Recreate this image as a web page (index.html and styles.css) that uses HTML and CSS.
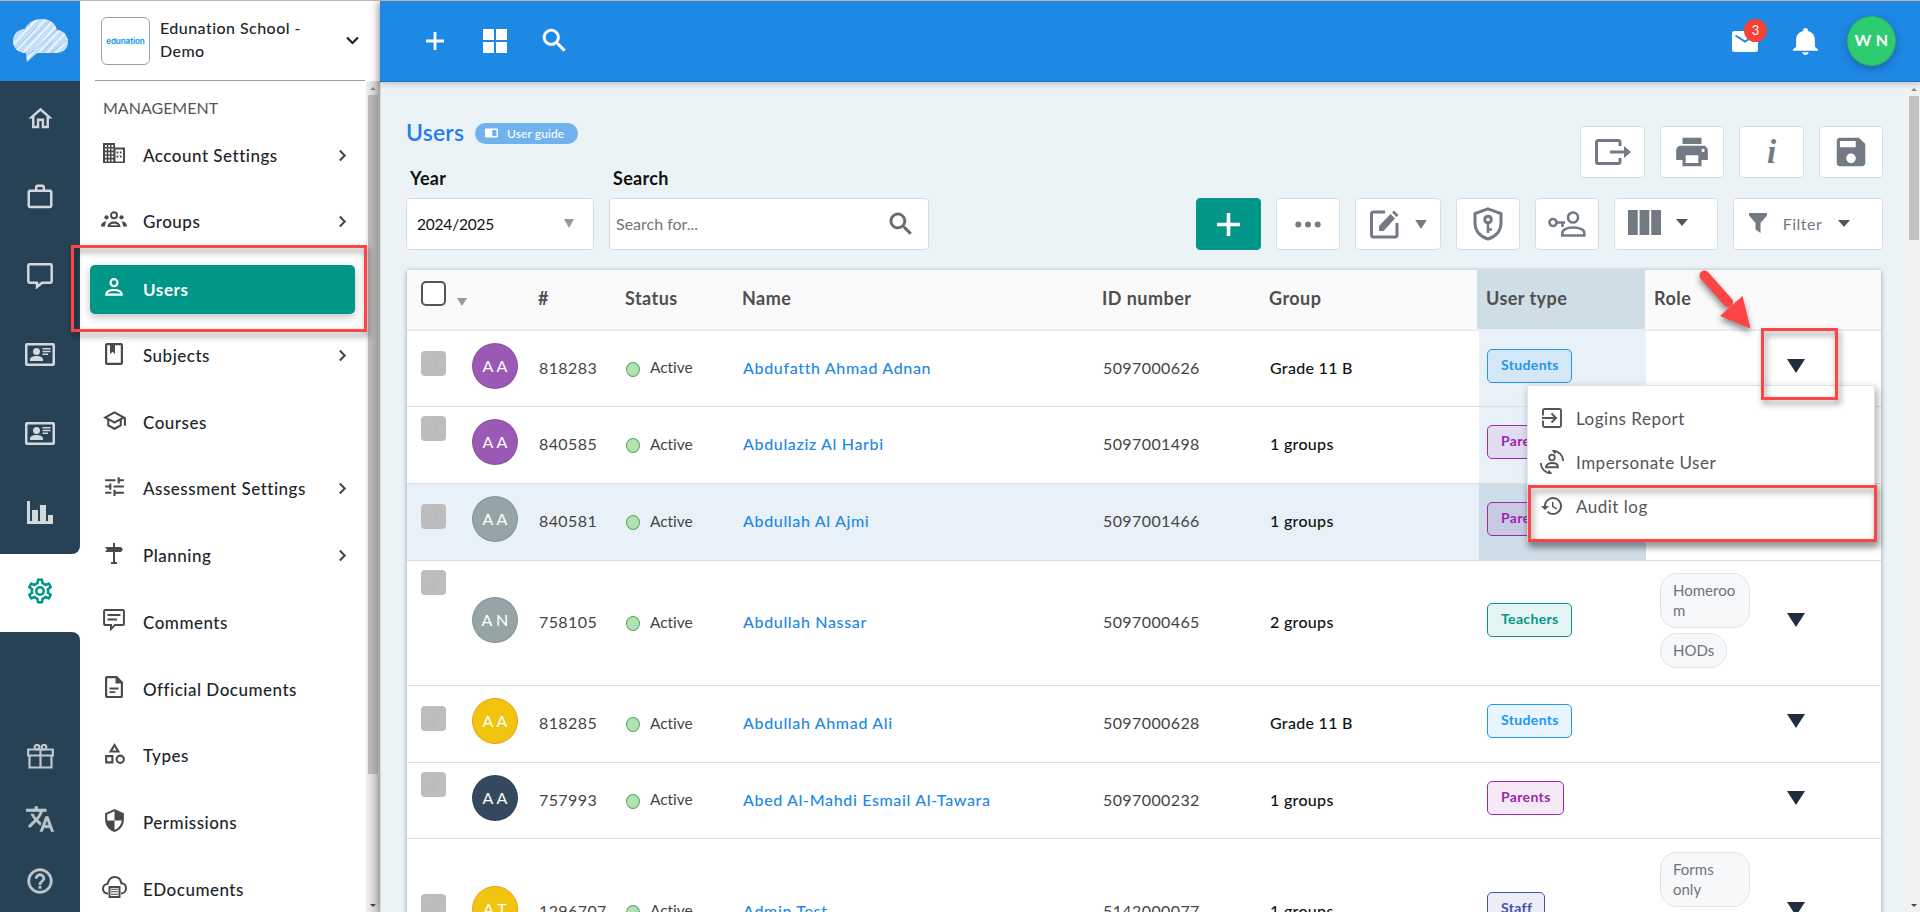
FILE: index.html
```
<!DOCTYPE html>
<html lang="en">
<head>
<meta charset="utf-8">
<title>Users</title>
<link rel="stylesheet" href="styles.css">
</head>
<body>
<svg class="defs" width="0" height="0">
  <symbol id="search" viewBox="0 0 24 24"><path d="M15.5 14h-.79l-.28-.27C15.41 12.59 16 11.11 16 9.5 16 5.91 13.09 3 9.5 3S3 5.91 3 9.5 5.91 16 9.5 16c1.61 0 3.09-.59 4.23-1.57l.27.28v.79l5 4.99L20.49 19l-4.99-5zm-6 0C7.01 14 5 11.99 5 9.5S7.01 5 9.5 5 14 7.01 14 9.5 11.99 14 9.5 14z" stroke="currentColor" stroke-width=".3"/></symbol>
  <symbol id="idcard" viewBox="0 0 30 23"><path fill-rule="evenodd" d="M2 0h26a2 2 0 0 1 2 2v19a2 2 0 0 1-2 2H2a2 2 0 0 1-2-2V2a2 2 0 0 1 2-2zM2.500 2.500v18h25v-18z"/><circle cx="11.500" cy="8.500" r="3.500"/><path d="M5 18v-1.500c0-2.300 3-3.500 6.500-3.500s6.500 1.200 6.500 3.500V18zM17.500 5h8v1.500h-8zM17.500 7.800h8v1.500h-8zM17.500 10.500h5.500V12h-5.500z"/></symbol>
  <symbol id="chev" viewBox="0 0 10 14"><path d="M2 1.500 7.500 7 2 12.500" fill="none" stroke="currentColor" stroke-width="2.200"/></symbol>
  <symbol id="tri" viewBox="0 0 18 14"><path d="M0 0h18L9 14z"/></symbol>
  <symbol id="check" viewBox="0 0 12 16"><path d="M1 10l3.500 4L11 1.500" fill="none" stroke="#b0bdc5" stroke-width="2"/></symbol>
</svg>
<div class="app">
  <nav class="rail">
    <div class="brand">
      <svg width="55" height="43" viewBox="0 0 55 43"><defs><clipPath id="cloud"><path d="M13 34C5 34 0 29 0 22c0-7 5-12 12-12C14 4 21 0 29 0c8 0 13 4 15 11 6 0 11 5 11 12 0 7-5 11-12 11H24L14 43z"/></clipPath></defs><g clip-path="url(#cloud)"><path d="M0 0h55v43H0z" fill="#c4dff7"/><g stroke="#eef7fe" stroke-width="1.800"><path d="M-6 22 14 2M-4 30 26 -2M2 33 33 0M6 38 40 2M13 41 44 6M23 36 50 8M32 36 54 12M40 37 58 17"/></g><g stroke="#8dc2f0" stroke-width=".9"><path d="M0 16 18 4M2 31 24 8M12 26 36 3M18 34 46 9M30 33 40 22M36 35 56 20M12 38 22 31"/></g></g></svg>
    </div>
    <div class="rail-top">
      <svg width="29" height="29" viewBox="0 0 24 24"><path d="M12 5.690l5 4.500V18h-2v-6H9v6H7v-7.810l5-4.500M12 3L2 12h3v8h6v-6h2v6h6v-8h3L12 3z"/></svg>
      <svg width="30" height="30" viewBox="0 0 24 24"><path d="M14 6V4h-4v2h4zM4 8v11h16V8H4zm16-2c1.110 0 2 .89 2 2v11c0 1.110-.89 2-2 2H4c-1.110 0-2-.89-2-2l.01-11c0-1.110.88-2 1.990-2h4V4c0-1.110.89-2 2-2h4c1.110 0 2 .89 2 2v2h4z"/></svg>
      <svg width="26" height="26" viewBox="0 0 26 26"><path d="M2.500 1.300h21a1.200 1.200 0 0 1 1.200 1.200v16a1.200 1.200 0 0 1-1.200 1.200H15l-5 4.300v-4.300H2.500a1.200 1.200 0 0 1-1.200-1.200v-16a1.200 1.200 0 0 1 1.200-1.200z" fill="none" stroke="currentColor" stroke-width="2.500"/></svg>
      <svg width="30" height="23"><use href="#idcard"/></svg>
      <svg width="30" height="23"><use href="#idcard"/></svg>
      <svg width="26" height="23" viewBox="0 0 26 23"><path d="M0 0h3v20h2V9h6v11h2V4h6v16h2v-6h5v9H0z"/></svg>
    </div>
    <div class="rail-active">
      <svg width="30" height="30" viewBox="0 0 24 24"><path d="M12,8A4,4 0 0,1 16,12A4,4 0 0,1 12,16A4,4 0 0,1 8,12A4,4 0 0,1 12,8M12,10A2,2 0 0,0 10,12A2,2 0 0,0 12,14A2,2 0 0,0 14,12A2,2 0 0,0 12,10M10,22C9.750,22 9.540,21.820 9.500,21.580L9.130,18.930C8.500,18.680 7.960,18.340 7.440,17.940L4.950,18.950C4.730,19.030 4.460,18.950 4.340,18.730L2.340,15.270C2.210,15.050 2.270,14.780 2.460,14.630L4.570,12.970L4.500,12L4.570,11L2.460,9.370C2.270,9.220 2.210,8.950 2.340,8.730L4.340,5.270C4.460,5.050 4.730,4.960 4.950,5.050L7.440,6.050C7.960,5.660 8.500,5.320 9.130,5.070L9.500,2.420C9.540,2.180 9.750,2 10,2H14C14.250,2 14.460,2.180 14.500,2.420L14.870,5.070C15.500,5.320 16.040,5.660 16.560,6.050L19.050,5.050C19.270,4.960 19.540,5.050 19.660,5.270L21.660,8.730C21.790,8.950 21.730,9.220 21.540,9.370L19.430,11L19.500,12L19.430,13L21.540,14.630C21.730,14.780 21.790,15.050 21.660,15.270L19.660,18.730C19.540,18.950 19.270,19.040 19.050,18.950L16.560,17.950C16.040,18.340 15.500,18.680 14.870,18.930L14.500,21.580C14.460,21.820 14.250,22 14,22H10M11.250,4L10.880,6.610C9.680,6.860 8.620,7.500 7.850,8.390L5.440,7.350L4.690,8.650L6.800,10.200C6.400,11.370 6.400,12.640 6.800,13.800L4.680,15.360L5.430,16.660L7.860,15.620C8.630,16.500 9.680,17.140 10.870,17.380L11.240,20H12.760L13.130,17.390C14.320,17.140 15.370,16.500 16.140,15.620L18.570,16.660L19.320,15.360L17.200,13.810C17.600,12.640 17.600,11.370 17.200,10.200L19.310,8.650L18.560,7.350L16.150,8.390C15.380,7.500 14.320,6.860 13.120,6.620L12.750,4H11.250Z"/></svg>
    </div>
    <div class="rail-bottom">
      <svg width="27" height="25" viewBox="0 0 27 25" fill="none" stroke="currentColor" stroke-width="2.200"><path d="M1.200 5.500h24.600v6H1.200zM2.500 11.500h22v12h-22zM13.500 5.500v18"/><circle cx="10" cy="3.200" r="2.300"/><circle cx="17" cy="3.200" r="2.300"/></svg>
      <svg width="30" height="30" viewBox="0 0 24 24"><path stroke="currentColor" stroke-width=".5" d="M12.870 15.070l-2.540-2.510.03-.03c1.740-1.940 2.980-4.170 3.710-6.530H17V4h-7V2H8v2H1v1.990h11.170C11.500 7.920 10.440 9.750 9 11.350 8.070 10.320 7.300 9.190 6.690 8h-2c.73 1.630 1.730 3.170 2.980 4.560l-5.090 5.020L4 19l5-5 3.110 3.110.76-2.040zM18.500 10h-2L12 22h2l1.120-3h4.750L21 22h2l-4.500-12zm-2.620 7l1.620-4.330L19.120 17h-3.240z"/></svg>
      <svg width="30" height="30" viewBox="0 0 24 24"><path stroke="currentColor" stroke-width=".3" d="M11 18h2v-2h-2v2zm1-16C6.480 2 2 6.480 2 12s4.480 10 10 10 10-4.480 10-10S17.520 2 12 2zm0 18c-4.410 0-8-3.590-8-8s3.590-8 8-8 8 3.590 8 8-3.590 8-8 8zm0-14c-2.210 0-4 1.790-4 4h2c0-1.100.9-2 2-2s2 .9 2 2c0 2-3 1.750-3 5h2c0-2.250 3-2.500 3-5 0-2.210-1.790-4-4-4z"/></svg>
    </div>
  </nav>

  <aside class="side">
    <div class="school">
      <div class="school-logo">edunation</div>
      <div class="school-name">Edunation School - Demo</div>
      <svg width="13" height="9" viewBox="0 0 13 9"><path d="M1 1.500 6.500 7 12 1.500" fill="none" stroke="#222" stroke-width="2.200"/></svg>
    </div>
    <div class="side-body">
      <div class="menu">
        <div class="menu-title">MANAGEMENT</div>
        <a class="item"><i><svg width="22" height="20" viewBox="0 0 22 20"><path fill-rule="evenodd" d="M0 0h12v4.500h10V20H0zM2 2v2h1.800V2zm3.300 0v2H7V2zm3.200 0v2h1.800V2zM2 5.600v2h1.800v-2zm3.300 0v2H7v-2zm3.200 0v2h1.800v-2zM2 9.200v2h1.800v-2zm3.300 0v2H7v-2zm3.200 0v2h1.800v-2zM2 12.800v2h1.800v-2zm3.300 0v2H7v-2zm3.200 0v2h1.800v-2zM2 16.400v2h1.800v-2zm3.300 0v2H7v-2zm3.200 0v2h1.800v-2zM12.500 6.500v12H20v-12z"/><path d="M13.500 8.500h1.800v2h-1.800zM16.800 8.500h1.800v2h-1.800zM13.500 12.500h1.800v2h-1.800zM16.800 12.500h1.800v2h-1.800z"/></svg></i><span>Account Settings</span><svg class="chev"><use href="#chev"/></svg></a>
        <a class="item"><i><svg width="26" height="17" viewBox="0 0 26 17"><circle cx="13" cy="4.200" r="3" fill="none" stroke="currentColor" stroke-width="1.900"/><circle cx="5.500" cy="6.300" r="2.100"/><circle cx="20.500" cy="6.300" r="2.100"/><path d="M6.500 16c0-3.500 3-5.500 6.500-5.500s6.500 2 6.500 5.500zM0 15.500c0-3 2-5 5.500-5-1 1.300-1.500 3-1.500 5zM26 15.500c0-3-2-5-5.500-5 1 1.300 1.500 3 1.500 5z"/><path d="M9 14.200c1-2 7-2 8 0z" fill="#fff"/></svg></i><span>Groups</span><svg class="chev"><use href="#chev"/></svg></a>
        <a class="item selected"><i><svg width="18" height="18" viewBox="0 0 18 18" fill="none" stroke="currentColor" stroke-width="2.200"><circle cx="9" cy="4.700" r="3.500"/><path d="M1.200 16.700c0-3 3.300-4.700 7.800-4.700s7.800 1.700 7.800 4.700z"/></svg></i><span>Users</span></a>
        <a class="item"><i><svg width="18" height="22" viewBox="0 0 18 22"><rect x="1.100" y="1.100" width="15.800" height="19.800" rx="1" fill="none" stroke="currentColor" stroke-width="2.200"/><path d="M5 1h5v10L7.500 8.800 5 11z"/></svg></i><span>Subjects</span><svg class="chev"><use href="#chev"/></svg></a>
        <a class="item"><i><svg width="25" height="25" viewBox="0 0 24 24"><path d="M12 3L1 9l4 2.180v6L12 21l7-3.820v-6l2-1.090V17h2V9L12 3zm6.820 6L12 12.720 5.180 9 12 5.280 18.820 9zM17 15.990l-5 2.730-5-2.730v-3.720L12 15l5-2.730v3.720z"/></svg></i><span>Courses</span></a>
        <a class="item"><i><svg width="25" height="25" viewBox="0 0 24 24"><path d="M3 17v2h6v-2H3zM3 5v2h10V5H3zm10 16v-2h8v-2h-8v-2h-2v6h2zM7 9v2H3v2h4v2h2V9H7zm14 4v-2H11v2h10zm-6-4h2V7h4V5h-4V3h-2v6z"/></svg></i><span>Assessment Settings</span><svg class="chev"><use href="#chev"/></svg></a>
        <a class="item"><i><svg width="18" height="21" viewBox="0 0 18 21"><path d="M8 0h2v4h6l2 2.500L16 9h-6v10h2v2H6v-2h2V9H0l2-2.500L0 4h8z"/></svg></i><span>Planning</span><svg class="chev"><use href="#chev"/></svg></a>
        <a class="item"><i><svg width="22" height="22" viewBox="0 0 22 22"><path d="M2 1.100h18a.9.9 0 0 1 .9.900v13a.9.9 0 0 1-.9.900H12L8 20v-4.100H2a.9.9 0 0 1-.9-.9V2a.9.9 0 0 1 .9-.9zM4.500 6h13M4.500 10.500h9.500" fill="none" stroke="currentColor" stroke-width="2"/></svg></i><span>Comments</span></a>
        <a class="item"><i><svg width="18" height="22" viewBox="0 0 18 22"><path d="M2 1.100h9.500l5.400 5.400V20a1 1 0 0 1-1 1H2a.9.9 0 0 1-.9-1V2A.9.9 0 0 1 2 1.100z" fill="none" stroke="currentColor" stroke-width="2.200"/><path d="M10.500 1v6.500H17zM4.500 11.500h9v1.900h-9zM4.500 15.200h5.800v1.900H4.500z"/></svg></i><span>Official Documents</span></a>
        <a class="item"><i><svg width="25" height="25" viewBox="0 0 24 24"><path d="M12 2l-5.500 9h11L12 2zm0 3.840L13.930 9h-3.870L12 5.840zM17.500 13a4.500 4.500 0 1 0 0 9 4.500 4.500 0 0 0 0-9zm0 7a2.500 2.500 0 1 1 0-5 2.500 2.500 0 0 1 0 5zM3 21.500h8v-8H3v8zm2-6h4v4H5v-4z"/></svg></i><span>Types</span></a>
        <a class="item"><i><svg width="25" height="25" viewBox="0 0 24 24"><path d="M12 1L3 5v6c0 5.550 3.840 10.740 9 12 5.160-1.260 9-6.450 9-12V5l-9-4zm0 10.990h7c-.53 4.120-3.280 7.790-7 8.940V12H5V6.300l7-3.110v8.800z"/></svg></i><span>Permissions</span></a>
        <a class="item"><i><svg width="25" height="22" viewBox="0 0 25 22"><path d="M6 17.500C3 17.500 1 15.500 1 12.800c0-2.600 2-4.600 4.500-4.800C6.500 4 9 1.100 12.600 1.100c3.600 0 6.200 2.600 6.700 6.200 2.700.2 4.700 2.200 4.700 4.900 0 3-2 5.200-5 5.200" fill="none" stroke="currentColor" stroke-width="2"/><path fill-rule="evenodd" d="M6.500 10h12v12h-12zm2 2v8h8v-8z"/><path d="M9 12.800h7v1H9zM9 15.300h7v1H9zM9 17.800h7v1H9z"/></svg></i><span>EDocuments</span></a>
      </div>
      <div class="bar side-bar"><b class="up"></b><span class="thumb"></span><b class="down"></b></div>
    </div>
  </aside>

  <main class="main">
    <header class="top">
      <svg width="18" height="18" viewBox="0 0 18 18"><path d="M9 0v18M0 9h18" stroke="#fff" stroke-width="2.800"/></svg>
      <svg width="24" height="24" viewBox="0 0 24 24"><path d="M0 0h11v11H0zM13 0h11v11H13zM0 13h11v11H0zM13 13h11v11H13z"/></svg>
      <svg width="31" height="31"><use href="#search"/></svg>
      <div class="top-right">
        <div class="mail"><svg width="26" height="21" viewBox="0 0 26 21"><rect width="26" height="21" rx="2.500"/><path d="M3.500 4.500 13 10.500l9.500-6" fill="none" stroke="#1e88e5" stroke-width="2"/></svg><span class="count">3</span></div>
        <svg class="bell" width="30" height="33" viewBox="4 2.500 16 19.500" preserveAspectRatio="none"><path d="M12 22c1.100 0 2-.9 2-2h-4c0 1.100.89 2 2 2zm6-6v-5c0-3.070-1.640-5.640-4.500-6.320V4c0-.83-.67-1.500-1.500-1.500s-1.500.67-1.500 1.500v.68C7.630 5.360 6 7.920 6 11v5l-2 2v1h16v-1l-2-2z"/></svg>
        <div class="me">W N</div>
      </div>
    </header>
    <div class="page">
      <div class="content">
        <section class="controls">
          <div class="left">
            <div class="title-row"><h1>Users</h1><a class="guide"><svg width="13" height="10" viewBox="0 0 13 10"><path fill-rule="evenodd" d="M1 .5h11a1 1 0 0 1 1 1v7a1 1 0 0 1-1 1H7L6.500 10 6 9.500H1a1 1 0 0 1-1-1v-7a1 1 0 0 1 1-1zM7.200 2v6h4.300V2z"/></svg>User guide</a></div>
            <div class="fields">
              <div class="field year"><label>Year</label><div class="box">2024/2025<svg width="10" height="9" viewBox="0 0 18 14" preserveAspectRatio="none"><path d="M0 0h18L9 14z"/></svg></div></div>
              <div class="field find"><label>Search</label><div class="box">Search for...<svg width="30" height="30"><use href="#search"/></svg></div></div>
            </div>
          </div>
          <div class="right">
            <div class="buttons">
              <div class="btn w65"><svg width="36" height="26" viewBox="0 0 36 26"><path d="M25 7V3a1.500 1.500 0 0 0-1.500-1.500H3A1.500 1.500 0 0 0 1.500 3v20A1.500 1.500 0 0 0 3 24.500h20.500A1.500 1.500 0 0 0 25 23v-4" fill="none" stroke="currentColor" stroke-width="3"/><path d="M15 11.500h14V7l7 6-7 6v-4.500H15z"/></svg></div>
              <div class="btn w64"><svg width="38" height="38" viewBox="0 0 24 24"><path d="M19 8H5c-1.660 0-3 1.340-3 3v6h4v4h12v-4h4v-6c0-1.660-1.340-3-3-3zm-3 11H8v-5h8v5zm3-7c-.55 0-1-.45-1-1s.45-1 1-1 1 .45 1 1-.45 1-1 1zm-1-9H6v4h12V3z"/></svg></div>
              <div class="btn w65 info">i</div>
              <div class="btn w64"><svg width="38" height="38" viewBox="0 0 24 24"><path d="M17 3H5c-1.110 0-2 .9-2 2v14c0 1.100.89 2 2 2h14c1.100 0 2-.9 2-2V7l-4-4zm-5 16c-1.660 0-3-1.340-3-3s1.340-3 3-3 3 1.340 3 3-1.340 3-3 3zm3-10H5V5h10v4z"/></svg></div>
            </div>
            <div class="buttons">
              <div class="btn w65 add"><svg width="23" height="23" viewBox="0 0 23 23"><path d="M11.500 0v23M0 11.500h23" stroke="#fff" stroke-width="3.600"/></svg></div>
              <div class="btn w64"><svg width="26" height="7" viewBox="0 0 26 7"><circle cx="3.300" cy="3.500" r="3"/><circle cx="13" cy="3.500" r="3"/><circle cx="22.700" cy="3.500" r="3"/></svg></div>
              <div class="btn w86"><svg width="30" height="30" viewBox="0 0 30 30"><path d="M15 3H3a1.500 1.500 0 0 0-1.500 1.500v22A1.500 1.500 0 0 0 3 28h22.500a1.500 1.500 0 0 0 1.500-1.500V14" fill="none" stroke="currentColor" stroke-width="3"/><path d="M9 22v-5L20.500 5l4.500 4.500L13.500 22zM22 3.500 24 1.500 28.500 6l-2 2z"/></svg><svg class="tri" width="12" height="9"><use href="#tri"/></svg></div>
              <div class="btn w64"><svg width="30" height="34" viewBox="0 0 30 34" fill="none" stroke="currentColor" stroke-width="3"><path d="M15 1.800 28 6.500V16c0 8-5.500 14-13 16C7.500 30 2 24 2 16V6.500z"/><circle cx="15" cy="12.500" r="3.300"/><path d="M15 16v10M15 22.500h4" stroke-width="2.600"/></svg></div>
              <div class="btn w64"><svg width="38" height="26" viewBox="0 0 38 26" fill="none" stroke="currentColor" stroke-width="2.600"><circle cx="25" cy="6.500" r="5"/><path d="M14.300 24.500V22c0-3 4-5.500 11-5.500s11 2.500 11 5.500v2.500z"/><circle cx="5" cy="11.500" r="3.500"/><path d="M8.500 11.500H17M14.500 11.500v4.500"/></svg></div>
              <div class="btn w104"><svg width="33" height="25" viewBox="0 0 33 25"><path d="M0 0h9.700v25H0zM11.600 0h9.700v25h-9.700zM23.200 0H33v25h-9.800z"/></svg><svg class="tri" width="12" height="7" viewBox="0 0 18 14" preserveAspectRatio="none"><path d="M0 0h18L9 14z"/></svg></div>
              <div class="btn w150"><svg width="18" height="20" viewBox="0 0 18 20"><path d="M0 0h18v2.500L11.500 10v10L6.500 16.500V10L0 2.500z"/></svg><span>Filter</span><svg class="tri" width="12" height="7" viewBox="0 0 18 14" preserveAspectRatio="none"><path d="M0 0h18L9 14z"/></svg></div>
            </div>
          </div>
        </section>

        <section class="table">
          <div class="row head">
            <div class="c-check"><span class="cb"></span><svg width="10" height="8"><use href="#tri"/></svg></div><div></div><div>#</div><div>Status</div><div>Name</div><div>ID number</div><div>Group</div><div class="c-type">User type</div><div class="c-role">Role</div><div></div>
          </div>
          <div class="row r1">
            <div class="c-check mid"><span class="off"><svg width="12" height="16"><use href="#check"/></svg></span></div><div class="av purple">A A</div><div class="num">818283</div><div class="st"><em></em>Active</div><div class="name">Abdufatth Ahmad Adnan</div><div class="num">5097000626</div><div class="grp">Grade 11 B</div><div class="c-type"><span class="tag stu">Students</span></div><div class="c-role"></div><div class="act"><svg width="18" height="14"><use href="#tri"/></svg></div>
          </div>
          <div class="row r2">
            <div class="c-check"><span class="off"><svg width="12" height="16"><use href="#check"/></svg></span></div><div class="av purple">A A</div><div class="num">840585</div><div class="st"><em></em>Active</div><div class="name">Abdulaziz Al Harbi</div><div class="num">5097001498</div><div class="grp">1 groups</div><div class="c-type"><span class="tag par">Parents</span></div><div class="c-role"></div><div class="act"></div>
          </div>
          <div class="row r3">
            <div class="c-check mid"><span class="off"><svg width="12" height="16"><use href="#check"/></svg></span></div><div class="av gray">A A</div><div class="num">840581</div><div class="st"><em></em>Active</div><div class="name">Abdullah Al Ajmi</div><div class="num">5097001466</div><div class="grp">1 groups</div><div class="c-type"><span class="tag par">Parents</span></div><div class="c-role"></div><div class="act"></div>
          </div>
          <div class="row r4">
            <div class="c-check"><span class="off"><svg width="12" height="16"><use href="#check"/></svg></span></div><div class="av gray">A N</div><div class="num">758105</div><div class="st"><em></em>Active</div><div class="name">Abdullah Nassar</div><div class="num">5097000465</div><div class="grp">2 groups</div><div class="c-type"><span class="tag tea">Teachers</span></div><div class="c-role"><span class="role">Homeroo<br>m</span><span class="role">HODs</span></div><div class="act"><svg width="18" height="14"><use href="#tri"/></svg></div>
          </div>
          <div class="row r5">
            <div class="c-check mid"><span class="off"><svg width="12" height="16"><use href="#check"/></svg></span></div><div class="av yellow">A A</div><div class="num">818285</div><div class="st"><em></em>Active</div><div class="name">Abdullah Ahmad Ali</div><div class="num">5097000628</div><div class="grp">Grade 11 B</div><div class="c-type"><span class="tag stu">Students</span></div><div class="c-role"></div><div class="act"><svg width="18" height="14"><use href="#tri"/></svg></div>
          </div>
          <div class="row r6">
            <div class="c-check"><span class="off"><svg width="12" height="16"><use href="#check"/></svg></span></div><div class="av navy">A A</div><div class="num">757993</div><div class="st"><em></em>Active</div><div class="name">Abed Al-Mahdi Esmail Al-Tawara</div><div class="num">5097000232</div><div class="grp">1 groups</div><div class="c-type"><span class="tag par">Parents</span></div><div class="c-role"></div><div class="act"><svg width="18" height="14"><use href="#tri"/></svg></div>
          </div>
          <div class="row r7">
            <div class="c-check low"><span class="off"><svg width="12" height="16"><use href="#check"/></svg></span></div><div class="av yellow">A T</div><div class="num">1296707</div><div class="st"><em></em>Active</div><div class="name">Admin Test</div><div class="num">5142000077</div><div class="grp">1 groups</div><div class="c-type"><span class="tag sta">Staff</span></div><div class="c-role"><span class="role">Forms<br>only</span><span class="role"></span></div><div class="act"><svg width="18" height="14"><use href="#tri"/></svg></div>
          </div>
        </section>
      </div>
      <div class="bar page-bar"><b class="up"></b><span class="thumb"></span><b class="down"></b></div>
    </div>
  </main>
</div>

<div class="dropdown">
  <a><svg width="24" height="24" viewBox="0 0 24 24"><path d="M3 9.500V4.500A1.500 1.500 0 0 1 4.500 3h15A1.500 1.500 0 0 1 21 4.500v15a1.500 1.500 0 0 1-1.500 1.500h-15A1.500 1.500 0 0 1 3 19.500v-5M2 12h13M11.500 7.500 16 12l-4.500 4.500" fill="none" stroke="currentColor" stroke-width="1.900"/></svg>Logins Report</a>
  <a><svg width="24" height="24" viewBox="0 0 24 24"><circle cx="12" cy="7.500" r="2.800" fill="none" stroke="currentColor" stroke-width="1.800"/><path d="M6 17.300c0-2.600 2.300-4.300 6-4.300s6 1.700 6 4.300z" fill="none" stroke="currentColor" stroke-width="1.900"/><path d="M12.500.8C18.500.8 23 5 23.200 11M11.500 23.200C5.500 23.200 1 19 .8 13" fill="none" stroke="currentColor" stroke-width="1.800"/><path d="M12 0l4.500.5L15 4.500zM12 24l-4.500-.5L9 19.500z"/></svg>Impersonate User</a>
  <a><svg width="24" height="24" viewBox="0 0 24 24"><path d="M13 3a9 9 0 0 0-9 9H1l3.890 3.890.07.14L9 12H6c0-3.870 3.130-7 7-7s7 3.130 7 7-3.130 7-7 7c-1.930 0-3.680-.79-4.940-2.060l-1.420 1.420A8.954 8.954 0 0 0 13 21a9 9 0 0 0 0-18zm-1 5v5l4.280 2.540.72-1.210-3.500-2.080V8H12z"/></svg>Audit log</a>
</div>
<div class="mark mark-users"></div>
<div class="mark mark-arrow"></div>
<div class="mark mark-audit"></div>
<svg class="pointer" width="64" height="70" viewBox="0 0 64 70"><path d="M9.500 9.500 33 36" stroke="#fd4545" stroke-width="10" stroke-linecap="round"/><path d="M55.500 62.500 25 50 47.500 30z" fill="#fd4545"/></svg>
</body>
</html>
```
FILE: styles.css
```
* { box-sizing: border-box; }
body { margin: 0; height: 912px; overflow: hidden; position: relative; font-family: Lato, "Open Sans", sans-serif; color: #212529; }
svg { fill: currentColor; display: block; flex: none; }
svg[fill="none"] { fill: none; }
.defs { position: absolute; }
.app { display: flex; height: 912px; border-top: 1px solid #c4b0ac; overflow: hidden; }

/* icon rail */
.rail { width: 80px; display: flex; flex-direction: column; background: #fff; }
.brand { height: 80px; background: #1e88e5; padding: 18px 0 0 13px; }
.rail-top { height: 473px; background: #284255; border-bottom-right-radius: 8px; display: flex; flex-direction: column; color: #d3d8dd; }
.rail-top svg, .rail-bottom svg { margin: 0 auto; }
.rail-top svg:nth-child(1) { margin-top: 23px; }
.rail-top svg:nth-child(2) { margin-top: 49px; }
.rail-top svg:nth-child(3) { margin-top: 51px; }
.rail-top svg:nth-child(4) { margin-top: 54px; }
.rail-top svg:nth-child(5) { margin-top: 56px; }
.rail-top svg:nth-child(6) { margin-top: 56px; }
.rail-active { height: 78px; color: #009688; display: flex; align-items: center; justify-content: center; padding-bottom: 4px; }
.rail-bottom { flex: 1; background: #284255; border-top-right-radius: 8px; color: #bfc6cc; }
.rail-bottom svg:nth-child(1) { margin-top: 112px; }
.rail-bottom svg:nth-child(2) { margin-top: 35px; }
.rail-bottom svg:nth-child(3) { margin-top: 32px; }

/* side menu */
.side { width: 300px; background: #fff; }
.school { height: 80px; width: 270px; margin-left: 15px; border-bottom: 1px solid #8fa5b3; display: flex; align-items: center; padding-left: 6px; }
.school-logo { width: 49px; height: 48px; border: 1px solid #8fa5b3; border-radius: 6px; display: flex; align-items: center; justify-content: center; font: 700 8px Inter, sans-serif; letter-spacing: -.1px; color: #1ca0e8; }
.school-name { width: 196px; padding: 0 44px 4px 10px; font-size: 16px; font-weight: 500; line-height: 23px; letter-spacing: .45px; }
.side-body { display: flex; justify-content: space-between; height: 831px; }
.menu { width: 275px; padding-left: 10px; }
.menu-title { font-size: 16px; height: 46px; padding: 17px 0 0 13px; line-height: 20px; color: #555; white-space: nowrap; }
.item { display: flex; align-items: center; height: 48px; margin-bottom: 18.700px; padding: 8px 0 0 9px; font-size: 17px; font-weight: 500; letter-spacing: .5px; }
.item i { width: 30px; display: flex; justify-content: center; color: #4a4a4a; margin: -4px 14px 0 0; }
.item span { flex: 1; }
.chev { width: 9px; height: 13px; margin-right: 8px; color: #444; }
.item.selected { height: 49px; margin: 23.200px 0 13.700px; padding-top: 0; background: #009688; border-radius: 5px; color: #fff; font-weight: 700; letter-spacing: .6px; box-shadow: 0 3px 8px rgba(0,0,0,.25); }
.item.selected i { color: #fff; }

.bar { display: flex; flex-direction: column; align-items: center; background: #f1f1f1; }
.side-bar { width: 14px; background: linear-gradient(90deg, #efefef, #ccc); }
.bar .thumb { width: 10px; background: #b8b8b8; }
.bar b { border: 3px solid transparent; height: 0; }
.bar .up { border-bottom-color: #8a8a8a; border-top: 0; margin: 6px 0 5px; }
.bar .down { border-top-color: #444; border-bottom: 0; margin: auto 0 5px; }
.side-bar .thumb { height: 679px; }

/* top bar */
.main { width: 1540px; display: flex; flex-direction: column; position: relative; box-shadow: -2px 0 8px rgba(0,0,0,.3); }
.top { height: 81px; flex: none; background: #1e88e5; border-bottom: 1px solid #1a6fc0; color: #fff; display: flex; align-items: center; padding-left: 46px; z-index: 1; box-shadow: 0 2px 6px rgba(0,0,0,.2); }
.top > svg { margin-top: -1px; }
.top > svg:nth-child(2) { margin-left: 39px; }
.top > svg:nth-child(3) { margin-left: 32px; }
.top-right { margin-left: auto; display: flex; align-items: center; padding-right: 24px; }
.mail { position: relative; margin-right: 35px; }
.count { position: absolute; left: 12px; top: -12px; width: 23px; height: 23px; border-radius: 50%; background: #f44336; font-size: 13px; line-height: 22px; text-align: center; }
.bell { width: 25px; height: 27px; margin-right: 29px; }
.me { width: 49px; height: 50px; border-radius: 50%; background: #2ecc71; border: 1px solid #29b765; font-size: 16px; font-weight: 700; line-height: 45px; text-align: center; letter-spacing: .3px; box-shadow: 0 3px 8px rgba(0,0,0,.25); }

/* page */
.page { flex: 1; display: flex; justify-content: space-between; background: #ebf3f7; border-left: 1px solid #d3d9de; min-height: 0; overflow: hidden; }
.content { width: 1475px; margin-left: 26px; }
.page-bar { width: 13px; }
.page-bar .thumb { width: 10px; height: 144px; background: #c1c1c1; }
.controls { display: flex; justify-content: space-between; height: 188px; margin-left: -1px; }
.title-row { display: flex; align-items: center; padding-top: 40px; height: 63px; }
h1 { margin: 0; width: 69px; font-size: 23px; font-weight: 600; color: #1e7cf5; line-height: 22px; letter-spacing: .2px; padding-bottom: 4px; }
.guide { width: 103px; height: 21px; border-radius: 11px; background: #70b2ee; color: #fff; font-size: 12px; font-weight: 500; letter-spacing: .1px; display: flex; align-items: center; padding: 0 0 1px 10px; gap: 9px; }
.fields { display: flex; gap: 15px; padding-top: 22px; }
.field label { display: block; font-size: 18px; font-weight: 700; color: #111; line-height: 22px; padding-left: 4px; margin-bottom: 9px; letter-spacing: .3px; }
.box { height: 52px; background: #fff; border: 1px solid #d8dcdf; border-radius: 4px; display: flex; align-items: center; justify-content: space-between; font-size: 16px; }
.year .box { width: 188px; padding: 0 19px 1px 10px; color: #111; font-size: 15.500px; letter-spacing: -.2px; }
.year svg { color: #999; }
.find .box { width: 320px; padding: 0 12px 1px 6px; color: #757575; }
.find svg { color: #666; }
.right { width: 687px; padding-top: 44px; display: flex; flex-direction: column; gap: 20px; margin-right: -1px; }
.buttons { display: flex; gap: 15px; justify-content: flex-end; }
.btn { height: 52px; background: #fff; border: 1px solid #d8dde1; border-radius: 4px; display: flex; align-items: center; justify-content: center; color: #727b84; }
.w64 { width: 64px; }
.w65 { width: 65px; }
.w86 { width: 86px; gap: 15px; }
.w104 { width: 104px; gap: 15px; padding: 0 17px 4px 0; }
.w150 { width: 150px; gap: 16px; font-size: 16px; letter-spacing: .5px; padding: 0 17px 2px 0; }
.w104 .tri, .w150 .tri { color: #555; }
.info { font: italic 700 33px "Liberation Serif", serif; }
.add { background: #009688; border-color: #009688; }

/* table */
.table { width: 1474px; height: 700px; background: #fff; box-shadow: 0 1px 5px rgba(0,0,0,.35); }
.row { display: grid; grid-template-columns: 65px 67px 87px 117px 360px 167px 209px 167px 116px 119px; align-items: center; height: 77px; border-bottom: 1px solid #dcdfe1; font-size: 16px; }
.row.head { height: 61px; background: #fafafa; border-bottom: 2px solid #ebeef1; font-weight: 700; font-size: 18px; color: #4f4f4f; letter-spacing: .45px; line-height: 24px; }
.row.head > div { margin-top: -3px; margin-left: -1px; }
.r1 { height: 76px; }
.r4 { height: 125px; }
.r6 { height: 76px; }
.r7 { height: 146px; }
.c-check { align-self: start; padding: 9px 0 0 14px; }
.c-check.mid { padding-top: 20px; }
.c-check.low { padding-top: 55px; }
.row.head > .c-check { display: flex; padding-top: 11px; align-items: flex-end; gap: 11px; color: #999; margin: 0; }
.cb { width: 25px; height: 25px; border: 2px solid #555; border-radius: 5px; background: #fff; }
.off { width: 25px; height: 25px; border-radius: 4px; background: #bdbdbd; display: flex; align-items: center; justify-content: center; }
.av { width: 46px; height: 46px; border-radius: 50%; color: #fff; text-align: center; line-height: 43px; border: 1px solid rgba(0,0,0,.12); margin-bottom: 6px; letter-spacing: .1px; }
.purple { background: #9b59b6; }
.gray { background: #95a5a6; }
.yellow { background: #f1c40f; border-color: #f39c12; }
.navy { background: #34495e; }
.num, .name, .grp, .st { padding-bottom: 3px; }
.num { color: #444; letter-spacing: .4px; }
.st { display: flex; align-items: center; color: #444; font-size: 15.500px; letter-spacing: -.05px; }
.st em { width: 14px; height: 15px; border-radius: 50%; background: #b5dfb7; border: 1px solid #4caf50; margin: 4px 10px 0 0; }
.name { color: #1e88e5; font-weight: 500; letter-spacing: .65px; }
.grp { color: #111; font-weight: 500; letter-spacing: .3px; }
.c-type { padding-left: 8px; align-self: stretch; display: flex; align-items: center; padding-bottom: 6px; }
.row.head > .c-type { background: #cfdde6; margin: 0 1px 0 -2px; padding: 0 0 3px 9px; }
.r1 .c-type, .r2 .c-type, .r3 { background: #e9f1f8; }
.r3 .c-type { background: #cfdde8; }
.r3 .c-role, .r3 .act { background: #fff; align-self: stretch; }
.tag { height: 34px; border: 1px solid; border-radius: 5px; padding: 0 12px 0 13px; line-height: 30px; font-size: 14px; font-weight: 700; letter-spacing: .35px; }
.stu { color: #2196f3; background: rgba(33,150,243,.1); }
.par { color: #9c27b0; background: rgba(156,39,176,.1); }
.tea { color: #009688; background: rgba(0,150,136,.1); }
.sta { color: #3f51b5; background: rgba(63,81,181,.1); }
.c-role { padding-left: 14px; display: flex; flex-direction: column; align-items: flex-start; gap: 5px; }
.head .c-role { padding-left: 9px; }
.r7 .c-role { align-self: start; padding-top: 18px; }
.role { border: 1px solid #dfe4e8; border-radius: 17px; background: #f6f8fa; color: #6c757d; font-size: 15px; line-height: 20px; padding: 6px 12px 7px; min-height: 34px; }
.role:first-child { width: 90px; margin-top: -5px; }
.role:empty { width: 74px; }
.act { padding: 0 0 6px 25px; color: #1f2d3d; }

/* open row menu */
.dropdown { position: absolute; left: 1527px; top: 385px; width: 348px; height: 157px; background: #fff; border: 1px solid #e2e5e8; box-shadow: 2px 4px 8px rgba(0,0,0,.35); padding-top: 10px; }
.dropdown a { display: flex; align-items: center; height: 44px; padding-left: 12px; gap: 12px; font-size: 17px; color: #555; letter-spacing: .5px; }

/* callouts */
.mark { position: absolute; border: 3px solid #fd4545; filter: drop-shadow(2px 4px 3px rgba(0,0,0,.45)); }
.mark-users { left: 71px; top: 245px; width: 296px; height: 87px; }
.mark-arrow { left: 1761px; top: 328px; width: 77px; height: 72px; }
.mark-audit { left: 1528px; top: 485px; width: 349px; height: 57px; }
.pointer { position: absolute; left: 1695px; top: 266px; filter: drop-shadow(0 4px 3px rgba(0,0,0,.45)); }
```
